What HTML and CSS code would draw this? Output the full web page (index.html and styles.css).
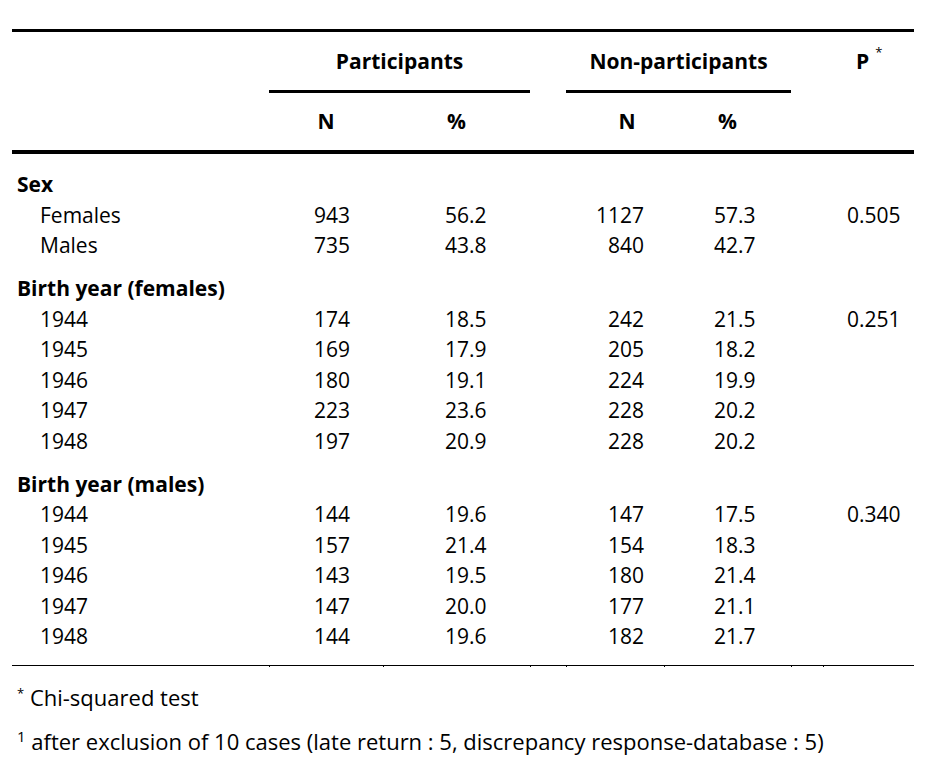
FILE: index.html
```html
<!DOCTYPE html>
<html lang="en">
<head>
<meta charset="utf-8">
<title>Participants vs Non-participants</title>
<link rel="stylesheet" href="styles.css">
</head>
<body>
<table class="stats">
  <colgroup>
    <col class="w-label">
    <col class="w-pn">
    <col class="w-pp">
    <col class="w-gap1">
    <col class="w-nn">
    <col class="w-np">
    <col class="w-gap2">
    <col class="w-p">
  </colgroup>
  <thead>
    <tr class="head1">
      <th></th>
      <th colspan="2" class="grp">Participants</th>
      <th></th>
      <th colspan="2" class="grp">Non-participants</th>
      <th></th>
      <th class="pcol">P<sup class="ast">*</sup></th>
    </tr>
    <tr class="head2">
      <th></th>
      <th class="hc">N</th>
      <th class="hc">%</th>
      <th></th>
      <th class="hc hn2">N</th>
      <th class="hc">%</th>
      <th></th>
      <th></th>
    </tr>
  </thead>
  <tbody>
    <tr class="group first"><td class="gl" colspan="8">Sex</td></tr>
    <tr><td class="sl">Females</td><td class="n1">943</td><td class="p1">56.2</td><td></td><td class="n2">1127</td><td class="p2">57.3</td><td></td><td class="pv">0.505</td></tr>
    <tr><td class="sl">Males</td><td class="n1">735</td><td class="p1">43.8</td><td></td><td class="n2">840</td><td class="p2">42.7</td><td></td><td class="pv"></td></tr>

    <tr class="group"><td class="gl" colspan="8">Birth year (females)</td></tr>
    <tr><td class="sl">1944</td><td class="n1">174</td><td class="p1">18.5</td><td></td><td class="n2">242</td><td class="p2">21.5</td><td></td><td class="pv">0.251</td></tr>
    <tr><td class="sl">1945</td><td class="n1">169</td><td class="p1">17.9</td><td></td><td class="n2">205</td><td class="p2">18.2</td><td></td><td class="pv"></td></tr>
    <tr><td class="sl">1946</td><td class="n1">180</td><td class="p1">19.1</td><td></td><td class="n2">224</td><td class="p2">19.9</td><td></td><td class="pv"></td></tr>
    <tr><td class="sl">1947</td><td class="n1">223</td><td class="p1">23.6</td><td></td><td class="n2">228</td><td class="p2">20.2</td><td></td><td class="pv"></td></tr>
    <tr><td class="sl">1948</td><td class="n1">197</td><td class="p1">20.9</td><td></td><td class="n2">228</td><td class="p2">20.2</td><td></td><td class="pv"></td></tr>

    <tr class="group"><td class="gl" colspan="8">Birth year (males)</td></tr>
    <tr><td class="sl">1944</td><td class="n1">144</td><td class="p1">19.6</td><td></td><td class="n2">147</td><td class="p2">17.5</td><td></td><td class="pv">0.340</td></tr>
    <tr><td class="sl">1945</td><td class="n1">157</td><td class="p1">21.4</td><td></td><td class="n2">154</td><td class="p2">18.3</td><td></td><td class="pv"></td></tr>
    <tr><td class="sl">1946</td><td class="n1">143</td><td class="p1">19.5</td><td></td><td class="n2">180</td><td class="p2">21.4</td><td></td><td class="pv"></td></tr>
    <tr><td class="sl">1947</td><td class="n1">147</td><td class="p1">20.0</td><td></td><td class="n2">177</td><td class="p2">21.1</td><td></td><td class="pv"></td></tr>
    <tr class="last"><td class="sl">1948</td><td class="n1 tick">144</td><td class="p1 tick">19.6</td><td class="tick"></td><td class="n2 tick">182</td><td class="p2 tick">21.7</td><td class="tick"></td><td class="pv tick"></td></tr>
  </tbody>
</table>
<div class="notes">
  <p class="note"><sup class="fn-ast">*</sup> Chi-squared test</p>
  <p class="note note2"><sup class="fn-num">1</sup> after exclusion of 10 cases (late return : 5, discrepancy response-database : 5)</p>
</div>
</body>
</html>
```

FILE: styles.css
```css
html, body {
  margin: 0;
  padding: 0;
  background: #ffffff;
}

body {
  font-family: "Open Sans", Lato, "Liberation Sans", sans-serif;
  font-size: 21px;
  color: #000000;
}

.stats {
  margin: 29px 0 0 12px;
  width: 902px;
  table-layout: fixed;
  border-collapse: separate;
  border-spacing: 0;
}

.w-label { width: 257px; }
.w-pn { width: 114px; }
.w-pp { width: 147px; }
.w-gap1 { width: 36px; }
.w-nn { width: 98px; }
.w-np { width: 127px; }
.w-gap2 { width: 32px; }
.w-p { width: 91px; }

.stats th,
.stats td {
  padding: 0;
  line-height: 30.5px;
  white-space: nowrap;
}

.stats th {
  font-weight: 700;
}

.stats .head1 th {
  border-top: 3px solid #000;
  border-bottom: 3px solid transparent;
  height: 58px;
  line-height: 58px;
  vertical-align: middle;
}

.stats .head1 th.grp {
  border-bottom-color: #000;
  text-align: center;
}

.stats .head1 th.pcol {
  text-align: left;
  padding-left: 33px;
}

.ast {
  font-size: 13px;
  font-weight: 400;
  vertical-align: 0;
  position: relative;
  top: -12px;
  margin-left: 6px;
  line-height: 0;
}

.stats .head2 th {
  border-bottom: 4px solid #000;
  height: 57px;
  line-height: 57px;
  vertical-align: middle;
}

.stats th.hc {
  text-align: center;
}

.stats th.hn2 {
  padding-left: 24px;
}

.stats .group td {
  padding-top: 12.5px;
}

.stats .group.first td {
  padding-top: 15px;
}

.stats td.gl {
  font-weight: 700;
  padding-left: 5px;
}

.stats td.sl {
  padding-left: 28px;
}

.stats td.n1 {
  text-align: right;
  padding-right: 33px;
}

.stats td.p1 {
  text-align: left;
  padding-left: 62px;
}

.stats td.n2 {
  text-align: right;
  padding-right: 20px;
}

.stats td.p2 {
  text-align: left;
  padding-left: 50px;
}

.stats td.pv {
  text-align: left;
  padding-left: 24px;
}

.stats .last td {
  padding-bottom: 13.5px;
  border-bottom: 1px solid #000;
}

.stats .last td.tick {
  position: relative;
}

.stats .last td.tick::after {
  content: "";
  position: absolute;
  left: 0;
  bottom: -2px;
  width: 1px;
  height: 2px;
  background: #000;
}

.notes {
  margin: 16px 0 0 17px;
  font-size: 22px;
}

.note {
  margin: 0;
  line-height: 30.5px;
}

.note2 {
  margin-top: 13.5px;
}

.fn-ast {
  font-size: 13px;
  vertical-align: 0;
  position: relative;
  top: -8px;
  line-height: 0;
}

.fn-num {
  font-size: 15px;
  vertical-align: 0;
  position: relative;
  top: -8px;
  line-height: 0;
}
```
